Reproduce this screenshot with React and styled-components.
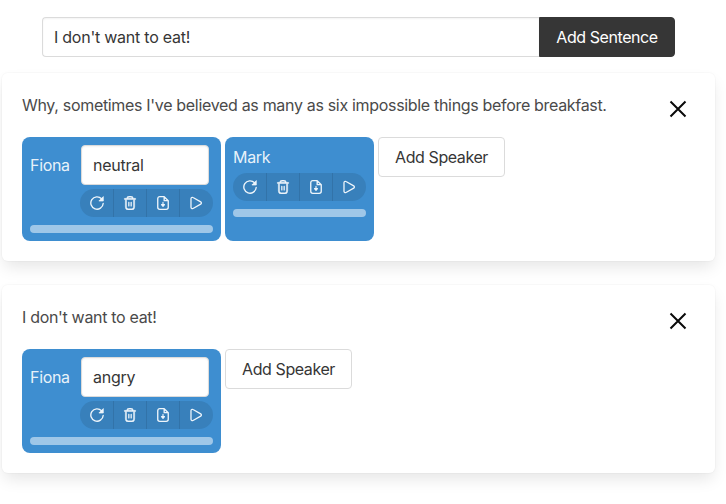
import React from "react";
import styled, { createGlobalStyle } from "styled-components";

const GlobalStyle = createGlobalStyle`
  *, *::before, *::after { box-sizing: border-box; }
  body {
    margin: 0;
    background: #fff;
    color: #4a4a4a;
    font-family: Inter, "Liberation Sans", sans-serif;
    font-size: 16px;
    line-height: 24px;
    letter-spacing: -0.32px;
  }
  button, input { font: inherit; letter-spacing: inherit; margin: 0; }
`;

const Page = styled.main`
  width: 713px;
  height: 504px;
  margin-left: 2px;
  padding-top: 17px;
`;

const SentenceForm = styled.div`
  display: flex;
  margin: 0 40px 16px;
`;

const TextInput = styled.input`
  height: 40px;
  min-width: 0;
  padding: 0 11px;
  border: 1px solid #dbdbdb;
  border-radius: 4px;
  background: #fff;
  color: #363636;
  outline: none;
  letter-spacing: -0.24px;
  box-shadow: inset 0 1px 2px rgba(10, 10, 10, 0.05);
`;

const SentenceInput = styled(TextInput)`
  flex: 1;
  border-right: 0;
  border-radius: 4px 0 0 4px;
`;

const StyleInput = styled(TextInput)`
  width: 128px;
  margin-right: 4px;
`;

const Button = styled.button`
  flex: none;
  width: ${(p) => (p.$dark ? 136 : 127)}px;
  height: 40px;
  padding: 0;
  border: 1px solid ${(p) => (p.$dark ? "#363636" : "#dbdbdb")};
  border-radius: ${(p) => (p.$dark ? "0 4px 4px 0" : "4px")};
  background: ${(p) => (p.$dark ? "#363636" : "#fff")};
  color: ${(p) => (p.$dark ? "#fff" : "#363636")};
  letter-spacing: -0.42px;
`;

const Box = styled.section`
  height: 188px;
  margin-bottom: 24px;
  padding: 20px;
  border-radius: 6px;
  background: #fff;
  box-shadow: 0 8px 16px -2px rgba(10, 10, 10, 0.1), 0 0 0 1px rgba(10, 10, 10, 0.02);
`;

const BoxHeader = styled.header`
  display: flex;
  justify-content: space-between;
  height: 44px;
`;

const Sentence = styled.p`
  margin: 0;
  white-space: nowrap;
`;

const CloseButton = styled.button`
  display: grid;
  place-items: center;
  width: 34px;
  height: 32px;
  padding: 0;
  border: 0;
  background: none;
  color: #0a0a0a;
`;

const SpeakerList = styled.div`
  display: flex;
  align-items: flex-start;
  gap: 4px;
`;

const SpeakerCard = styled.article`
  display: flex;
  flex-direction: column;
  height: 104px;
  width: ${(p) => (p.$wide ? 199 : 149)}px;
  padding: 8px;
  border-radius: 8px;
  background: #3e8ed0;
  color: rgba(255, 255, 255, 0.9);
`;

const SpeakerRow = styled.div`
  display: flex;
  align-items: center;
  justify-content: space-between;
  height: ${(p) => (p.$wide ? 40 : 24)}px;
`;

const Controls = styled.div`
  display: flex;
  align-self: flex-end;
  width: 133px;
  height: 28px;
  margin-top: 4px;
  border-radius: 14px;
  background: #3880bb;
  overflow: hidden;
`;

const IconButton = styled.button`
  display: flex;
  align-items: center;
  width: 33px;
  padding: 0 0 0 9px;
  border: 0;
  background: none;
  color: #eef5fb;

  &:first-child { width: 34px; padding-left: 10px; }
  &:not(:last-child) { border-right: 1px solid #3273a9; }
`;

const Progress = styled.div`
  height: 8px;
  margin-top: 8px;
  border-radius: 4px;
  background: #9fc7e8;
`;

const Icon = styled.svg`
  display: block;
  flex: none;
  width: ${(p) => p.$size || 14}px;
  height: ${(p) => p.$size || 14}px;
  fill: currentColor;
`;

const RefreshIcon = () => (
  <Icon viewBox="0 0 24 24">
    <path d="M19.8 4.8A10.6 10.6 0 1 0 22.6 12.8" fill="none" stroke="currentColor" strokeWidth="2.3" strokeLinecap="round" />
    <path d="M22.8 1v7.6h-7.6z" stroke="currentColor" strokeWidth="1.2" strokeLinejoin="round" />
  </Icon>
);

const TrashIcon = () => (
  <Icon viewBox="0 0 24 24">
    <path d="M21,4H17.9A5.009,5.009,0,0,0,13,0H11A5.009,5.009,0,0,0,6.1,4H3A1,1,0,0,0,3,6H4V19a5.006,5.006,0,0,0,5,5h6a5.006,5.006,0,0,0,5-5V6h1a1,1,0,0,0,0-2ZM11,2h2a3.006,3.006,0,0,1,2.829,2H8.171A3.006,3.006,0,0,1,11,2Zm7,17a3,3,0,0,1-3,3H9a3,3,0,0,1-3-3V6H18Z" stroke="currentColor" strokeWidth="0.8" />
    <path d="M10 11v6M14 11v6" stroke="currentColor" strokeWidth="2.2" strokeLinecap="round" />
  </Icon>
);

const FileIcon = () => (
  <Icon viewBox="0 0 24 24">
    <path d="M14 1.2H6.5a3.5 3.5 0 0 0-3.5 3.5v14.6a3.5 3.5 0 0 0 3.5 3.5h11a3.5 3.5 0 0 0 3.5-3.5V8zM14 1.2V8h7" fill="none" stroke="currentColor" strokeWidth="2.3" strokeLinejoin="round" />
    <path d="M12 11v6M9.4 14.8h5.2L12 17.6z" stroke="currentColor" strokeWidth="2" strokeLinejoin="round" strokeLinecap="round" />
  </Icon>
);

const PlayIcon = () => (
  <Icon viewBox="0 0 24 24">
    <path d="M3.4 4.6v14.8a2.3 2.3 0 0 0 3.5 2l13.2-7.4a2.3 2.3 0 0 0 0-4L6.9 2.6a2.3 2.3 0 0 0-3.5 2z" fill="none" stroke="currentColor" strokeWidth="2.2" />
  </Icon>
);

const CloseIcon = () => (
  <Icon $size={18} viewBox="0 0 18 18">
    <path d="M1.5 1.5l15 15M16.5 1.5l-15 15" stroke="currentColor" strokeWidth="2" />
  </Icon>
);

function Speaker({ name, style }) {
  const wide = Boolean(style);
  return (
    <SpeakerCard $wide={wide}>
      <SpeakerRow $wide={wide}>
        <span>{name}</span>
        {wide && <StyleInput defaultValue={style} aria-label="Style" />}
      </SpeakerRow>
      <Controls>
        <IconButton aria-label="Regenerate"><RefreshIcon /></IconButton>
        <IconButton aria-label="Delete"><TrashIcon /></IconButton>
        <IconButton aria-label="Download"><FileIcon /></IconButton>
        <IconButton aria-label="Play"><PlayIcon /></IconButton>
      </Controls>
      <Progress />
    </SpeakerCard>
  );
}

const sentences = [
  {
    text: "Why, sometimes I've believed as many as six impossible things before breakfast.",
    speakers: [{ name: "Fiona", style: "neutral" }, { name: "Mark" }],
  },
  { text: "I don't want to eat!", speakers: [{ name: "Fiona", style: "angry" }] },
];

export default function App() {
  return (
    <>
      <GlobalStyle />
      <Page>
        <SentenceForm>
          <SentenceInput defaultValue="I don't want to eat!" aria-label="Sentence" />
          <Button $dark>Add Sentence</Button>
        </SentenceForm>
        {sentences.map((s) => (
          <Box key={s.text}>
            <BoxHeader>
              <Sentence>{s.text}</Sentence>
              <CloseButton aria-label="Remove sentence"><CloseIcon /></CloseButton>
            </BoxHeader>
            <SpeakerList>
              {s.speakers.map((sp) => <Speaker key={sp.name} {...sp} />)}
              <Button>Add Speaker</Button>
            </SpeakerList>
          </Box>
        ))}
      </Page>
    </>
  );
}
